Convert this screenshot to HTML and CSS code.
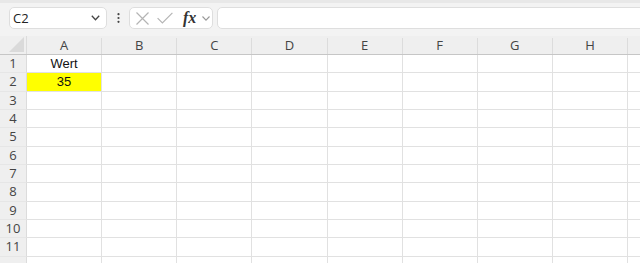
FILE: index.html
```html
<!DOCTYPE html>
<html lang="de">
<head>
    <meta charset="UTF-8">
    <title>Tabelle</title>
    <link rel="stylesheet" href="styles.css">
</head>
<body>
    <div class="toolbar">
        <div class="namebox">
            <span>C2</span>
            <svg width="9" height="6" viewBox="0 0 9 6"><path d="M0.8 0.8 L4.5 4.8 L8.2 0.8" fill="none" stroke="#444" stroke-width="1.3"/></svg>
        </div>
        <div class="more">
            <svg width="3" height="10" viewBox="0 0 3 10"><circle cx="1.5" cy="1.2" r="1.1" fill="#444"/><circle cx="1.5" cy="5" r="1.1" fill="#444"/><circle cx="1.5" cy="8.8" r="1.1" fill="#444"/></svg>
        </div>
        <div class="fxbox">
            <svg class="cancel" width="13" height="13" viewBox="0 0 13 13"><path d="M0.5 0.5 L12.5 12.5 M12.5 0.5 L0.5 12.5" stroke="#b4b4b4" stroke-width="1.2"/></svg>
            <svg class="enter" width="16" height="12" viewBox="0 0 16 12"><path d="M0.6 6.2 L5.4 11 L15.4 0.8" fill="none" stroke="#b4b4b4" stroke-width="1.2"/></svg>
            <span class="fx">fx</span>
            <svg width="8" height="5" viewBox="0 0 8 5"><path d="M0.5 0.5 L4 4.2 L7.5 0.5" fill="none" stroke="#999" stroke-width="1.1"/></svg>
        </div>
        <div class="formula"></div>
    </div>

    <div class="sheet">
        <div class="row head">
            <div class="corner"><svg width="15" height="15" viewBox="0 0 15 15"><polygon points="15,0 15,15 0,15" fill="#dadada"/></svg></div>
            <div class="col">A</div><div class="col">B</div><div class="col">C</div><div class="col">D</div><div class="col">E</div><div class="col">F</div><div class="col">G</div><div class="col">H</div><div class="col"></div>
        </div>
        <div class="row">
            <div class="num">1</div><div class="cell">Wert</div><div class="cell"></div><div class="cell"></div><div class="cell"></div><div class="cell"></div><div class="cell"></div><div class="cell"></div><div class="cell"></div><div class="cell"></div>
        </div>
        <div class="row">
            <div class="num">2</div><div class="cell marked">35</div><div class="cell"></div><div class="cell"></div><div class="cell"></div><div class="cell"></div><div class="cell"></div><div class="cell"></div><div class="cell"></div><div class="cell"></div>
        </div>
        <div class="row">
            <div class="num">3</div><div class="cell"></div><div class="cell"></div><div class="cell"></div><div class="cell"></div><div class="cell"></div><div class="cell"></div><div class="cell"></div><div class="cell"></div><div class="cell"></div>
        </div>
        <div class="row">
            <div class="num">4</div><div class="cell"></div><div class="cell"></div><div class="cell"></div><div class="cell"></div><div class="cell"></div><div class="cell"></div><div class="cell"></div><div class="cell"></div><div class="cell"></div>
        </div>
        <div class="row">
            <div class="num">5</div><div class="cell"></div><div class="cell"></div><div class="cell"></div><div class="cell"></div><div class="cell"></div><div class="cell"></div><div class="cell"></div><div class="cell"></div><div class="cell"></div>
        </div>
        <div class="row">
            <div class="num">6</div><div class="cell"></div><div class="cell"></div><div class="cell"></div><div class="cell"></div><div class="cell"></div><div class="cell"></div><div class="cell"></div><div class="cell"></div><div class="cell"></div>
        </div>
        <div class="row">
            <div class="num">7</div><div class="cell"></div><div class="cell"></div><div class="cell"></div><div class="cell"></div><div class="cell"></div><div class="cell"></div><div class="cell"></div><div class="cell"></div><div class="cell"></div>
        </div>
        <div class="row">
            <div class="num">8</div><div class="cell"></div><div class="cell"></div><div class="cell"></div><div class="cell"></div><div class="cell"></div><div class="cell"></div><div class="cell"></div><div class="cell"></div><div class="cell"></div>
        </div>
        <div class="row">
            <div class="num">9</div><div class="cell"></div><div class="cell"></div><div class="cell"></div><div class="cell"></div><div class="cell"></div><div class="cell"></div><div class="cell"></div><div class="cell"></div><div class="cell"></div>
        </div>
        <div class="row">
            <div class="num">10</div><div class="cell"></div><div class="cell"></div><div class="cell"></div><div class="cell"></div><div class="cell"></div><div class="cell"></div><div class="cell"></div><div class="cell"></div><div class="cell"></div>
        </div>
        <div class="row">
            <div class="num">11</div><div class="cell"></div><div class="cell"></div><div class="cell"></div><div class="cell"></div><div class="cell"></div><div class="cell"></div><div class="cell"></div><div class="cell"></div><div class="cell"></div>
        </div>
        <div class="row">
            <div class="num"></div><div class="cell"></div><div class="cell"></div><div class="cell"></div><div class="cell"></div><div class="cell"></div><div class="cell"></div><div class="cell"></div><div class="cell"></div><div class="cell"></div>
        </div>
    </div>
</body>
</html>
```

FILE: styles.css
```css
* {
    margin: 0;
    padding: 0;
    box-sizing: border-box;
}

html,
body {
    height: 100%;
    overflow: hidden;
}

body {
    background-color: #f3f3f3;
    border-top: 3px solid #e8e8e8;
    font-family: "Open Sans", "Noto Sans", sans-serif;
    color: #333;
}

.toolbar {
    display: flex;
    align-items: center;
    height: 22px;
    margin-top: 4px;
    padding-left: 9px;
    overflow: hidden;
}

.toolbar > * {
    flex-shrink: 0;
}

.namebox,
.fxbox,
.formula {
    height: 22px;
    background-color: #fff;
    border: 1px solid #dedede;
    border-radius: 5px;
    display: flex;
    align-items: center;
}

.namebox {
    width: 98px;
    justify-content: space-between;
    padding: 0 6px 0 3px;
    font-size: 13px;
    color: #222;
}

.more {
    width: 22px;
    display: flex;
    justify-content: center;
    align-items: center;
}

.fxbox {
    width: 84px;
    padding-left: 6px;
}

.fxbox .enter {
    margin-left: 8px;
}

.fx {
    font-family: "Liberation Serif", serif;
    font-style: italic;
    font-weight: bold;
    font-size: 16px;
    color: #333;
    margin-left: 10px;
    margin-right: 6px;
    line-height: 1;
}

.formula {
    width: 440px;
    margin-left: 4px;
}

.sheet {
    margin-top: 7px;
    width: 100%;
    overflow: hidden;
}

.row {
    display: grid;
    grid-template-columns: 27px repeat(9, 75.125px);
    height: 18.33px;
    background-color: #fff;
}

.row.head {
    height: 19px;
    background-color: #efefef;
    border-bottom: 1px solid #c6c6c6;
    align-items: end;
}

.corner {
    height: 18px;
    border-right: 1px solid #dcdcdc;
    display: flex;
    justify-content: flex-end;
    align-items: flex-end;
    padding: 0 2px 2px 0;
}

.col {
    height: 16px;
    border-right: 1px solid #dcdcdc;
    font-size: 13px;
    line-height: 15px;
    text-align: center;
    color: #444;
}

.num {
    background-color: #efefef;
    border-right: 1px solid #dcdcdc;
    border-bottom: 1px solid #e6e6e6;
    font-size: 13px;
    line-height: 17px;
    text-align: center;
    color: #444;
}

.cell {
    border-right: 1px solid #e1e1e1;
    border-bottom: 1px solid #e1e1e1;
    font-family: "Liberation Sans", Arial, sans-serif;
    font-size: 13px;
    line-height: 17px;
    text-align: center;
    color: #111;
}

.cell.marked {
    background-color: #ffff00;
}
```
